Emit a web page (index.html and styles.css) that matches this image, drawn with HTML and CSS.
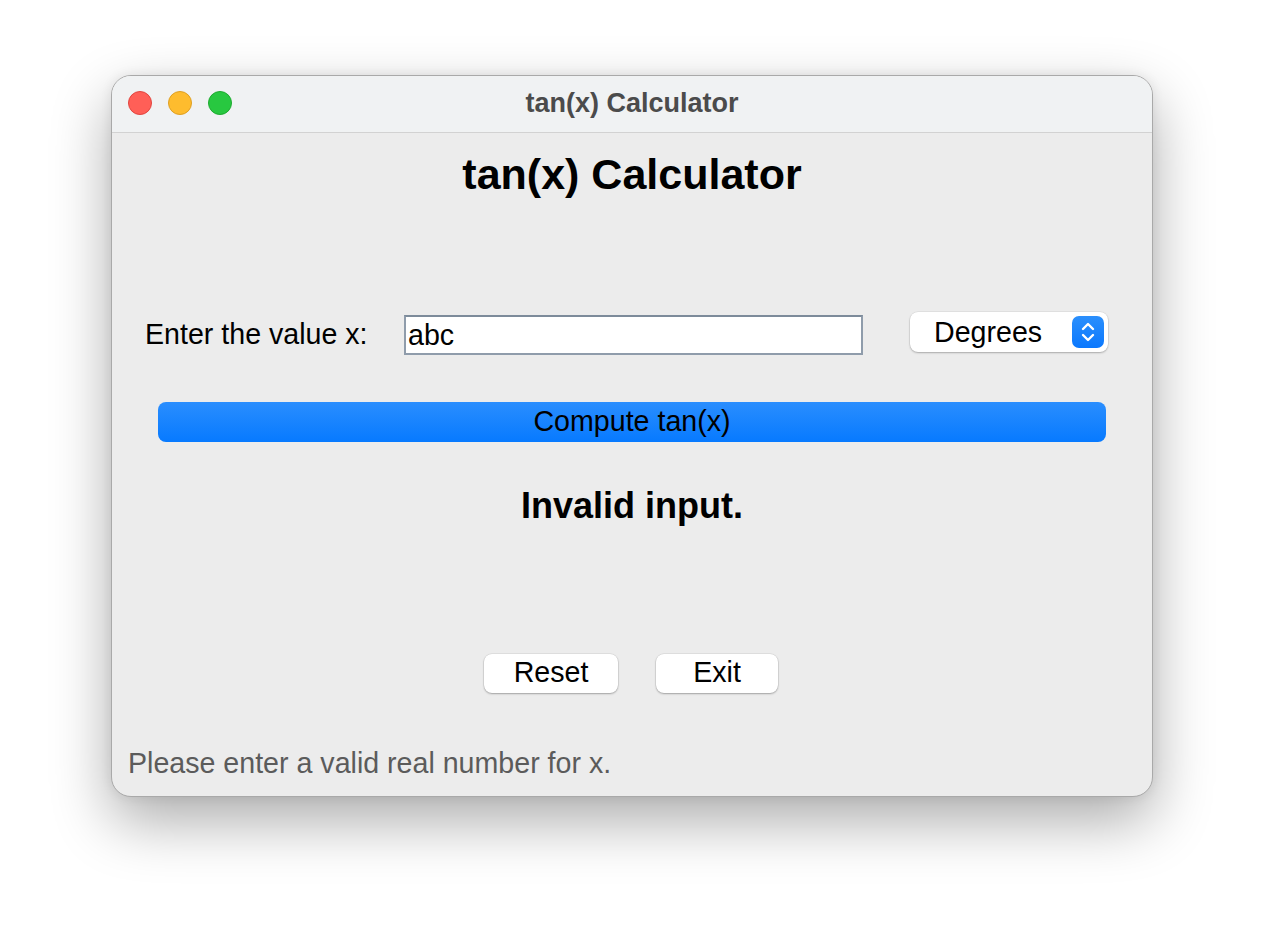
FILE: index.html
```html
<!DOCTYPE html>
<html>
<head>
<meta charset="utf-8">
<title>tan(x) Calculator</title>
<link rel="stylesheet" href="styles.css">
</head>
<body>
<div class="window">
  <div class="titlebar">
    <div class="lights">
      <span class="light red"></span>
      <span class="light yellow"></span>
      <span class="light green"></span>
    </div>
    <div class="wtitle">tan(x) Calculator</div>
  </div>
  <div class="content">
    <h1 class="heading">tan(x) Calculator</h1>
    <div class="row">
      <label class="label">Enter the value x:</label>
      <div class="input">abc</div>
      <div class="select">
        <span class="select-text">Degrees</span>
        <span class="select-arrows">
          <svg width="32" height="32" viewBox="0 0 32 32">
            <path d="M11 13 L16 8 L21 13" fill="none" stroke="#fff" stroke-width="2.4" stroke-linecap="round" stroke-linejoin="round"/>
            <path d="M11 19 L16 24 L21 19" fill="none" stroke="#fff" stroke-width="2.4" stroke-linecap="round" stroke-linejoin="round"/>
          </svg>
        </span>
      </div>
    </div>
    <div class="compute">Compute tan(x)</div>
    <div class="result">Invalid input.</div>
    <div class="actions">
      <div class="btn btn-reset">Reset</div>
      <div class="btn btn-exit">Exit</div>
    </div>
    <div class="status">Please enter a valid real number for x.</div>
  </div>
</div>
</body>
</html>
```

FILE: styles.css
```css
html, body {
  margin: 0;
  padding: 0;
  background: #ffffff;
}
body {
  font-family: "Liberation Sans", Arial, sans-serif;
  width: 1264px;
  height: 944px;
  overflow: hidden;
}
.window {
  margin: 75px 0 0 111px;
  width: 1040px;
  height: 720px;
  border: 1px solid #a9a9a9;
  border-radius: 20px;
  overflow: hidden;
  background: #ececec;
  box-shadow: 0 24px 60px rgba(0, 0, 0, 0.33), 0 0 12px rgba(0, 0, 0, 0.08);
  display: flex;
  flex-direction: column;
}
.titlebar {
  height: 56px;
  background: #f0f2f3;
  border-bottom: 1px solid #d2d2d2;
  position: relative;
  display: flex;
  align-items: center;
  justify-content: center;
  flex-shrink: 0;
}
.lights {
  position: absolute;
  left: 16px;
  top: 15px;
  display: flex;
  gap: 16px;
}
.light {
  width: 22px;
  height: 22px;
  border-radius: 50%;
  display: block;
}
.red { background: #ff5f57; border: 1px solid #e1453f; }
.yellow { background: #febc2e; border: 1px solid #de9f22; }
.green { background: #28c840; border: 1px solid #1eaa2f; }
.wtitle {
  font-size: 27px;
  font-weight: bold;
  color: #4b4b4b;
  margin-top: -2px;
}
.content {
  flex: 1;
  display: flex;
  flex-direction: column;
}
.heading {
  margin: 16px 0 0 0;
  height: 50px;
  line-height: 50px;
  font-size: 43px;
  font-weight: bold;
  text-align: center;
  color: #000;
}
.row {
  margin-top: 113px;
  height: 43px;
  display: flex;
  align-items: center;
  padding-left: 33px;
}
.label {
  width: 259px;
  font-size: 28.6px;
  color: #000;
  line-height: 32px;
}
.input {
  width: 453px;
  height: 36px;
  margin-top: 3px;
  border: 2px solid #8f9cab;
  border-top-color: #7d8b9a;
  background: #fff;
  font-size: 28.6px;
  line-height: 36px;
  padding-left: 2px;
  box-sizing: content-box;
  color: #000;
}
.select {
  margin-left: 47px;
  width: 198px;
  height: 40px;
  margin-top: -3px;
  background: #fff;
  border-radius: 8px;
  box-shadow: 0 1px 2px rgba(0, 0, 0, 0.25), 0 0 0 0.5px rgba(0, 0, 0, 0.08);
  display: flex;
  align-items: center;
  justify-content: space-between;
  box-sizing: border-box;
  padding: 0 4px 0 24px;
}
.select-text {
  font-size: 28.6px;
  color: #000;
}
.select-arrows {
  width: 32px;
  height: 32px;
  border-radius: 7px;
  background: linear-gradient(#2b8ffc, #0a78fe);
  display: flex;
}
.compute {
  margin: 47px 0 0 46px;
  width: 948px;
  height: 40px;
  border-radius: 8px;
  background: linear-gradient(#2a8efe, #077aff);
  color: #000;
  font-size: 28.6px;
  line-height: 38px;
  text-align: center;
}
.result {
  margin-top: 44px;
  height: 40px;
  line-height: 40px;
  text-align: center;
  font-size: 36px;
  font-weight: bold;
  color: #000;
}
.actions {
  margin-top: 128px;
  display: flex;
  justify-content: center;
  gap: 38px;
  padding-right: 2px;
}
.btn {
  height: 39px;
  line-height: 37px;
  background: #fff;
  border-radius: 8px;
  box-shadow: 0 1px 2px rgba(0, 0, 0, 0.28), 0 0 0 0.5px rgba(0, 0, 0, 0.1);
  font-size: 28.6px;
  text-align: center;
  color: #000;
}
.btn-reset { width: 134px; }
.btn-exit { width: 122px; }
.status {
  margin-top: 54px;
  padding-left: 16px;
  font-size: 28.6px;
  line-height: 32px;
  color: #5b5b5b;
}
```
